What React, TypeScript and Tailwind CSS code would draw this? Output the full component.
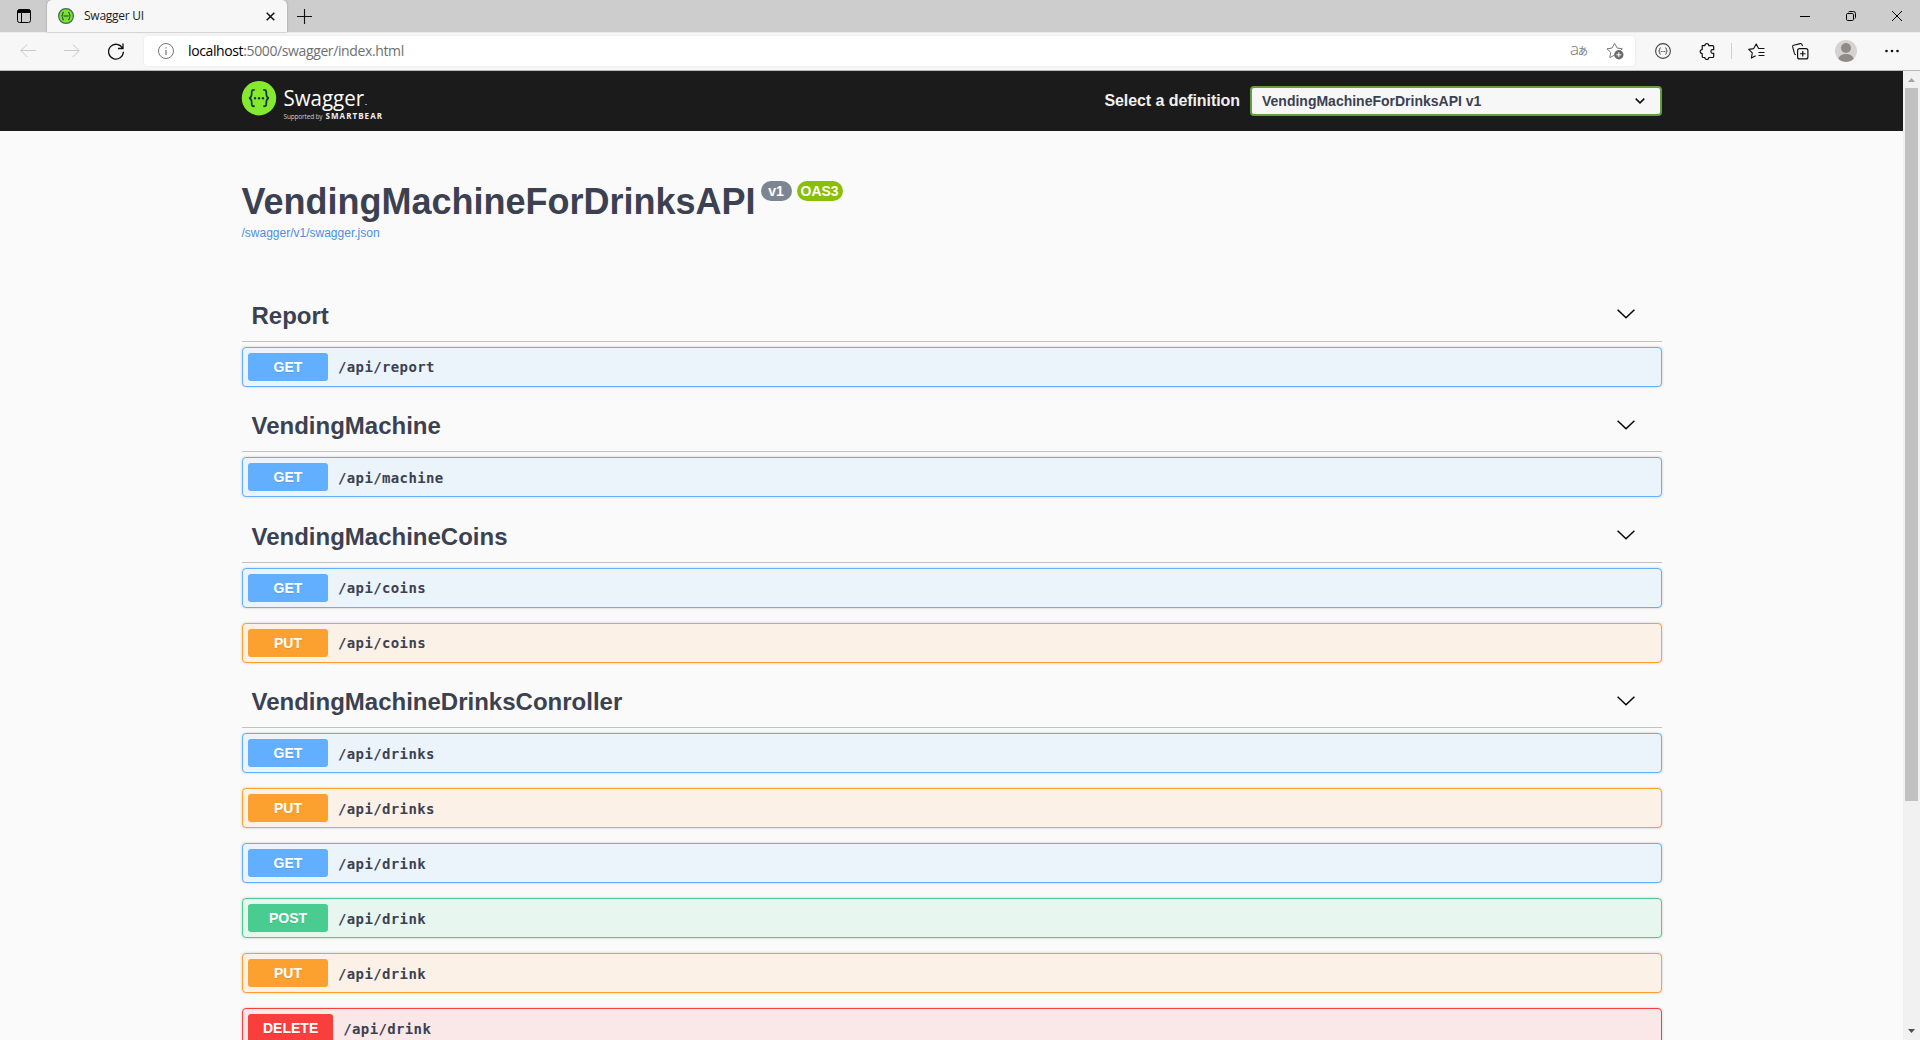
import React from "react";

type Method = "GET" | "PUT" | "POST" | "DELETE";

interface Operation {
  method: Method;
  path: string;
}

interface Section {
  name: string;
  header: string;
  chevron: string;
  pathOffset: string;
  operations: Operation[];
}

const sections: Section[] = [
  {
    name: "Report",
    header: "",
    chevron: "mb-[3px]",
    pathOffset: "pb-px",
    operations: [{ method: "GET", path: "/api/report" }],
  },
  {
    name: "VendingMachine",
    header: "mt-[13px]",
    chevron: "mb-px",
    pathOffset: "pt-px",
    operations: [{ method: "GET", path: "/api/machine" }],
  },
  {
    name: "VendingMachineCoins",
    header: "mt-[14px]",
    chevron: "mb-[3px]",
    pathOffset: "pb-px",
    operations: [
      { method: "GET", path: "/api/coins" },
      { method: "PUT", path: "/api/coins" },
    ],
  },
  {
    name: "VendingMachineDrinksConroller",
    header: "mt-[13px]",
    chevron: "mb-px",
    pathOffset: "pt-px",
    operations: [
      { method: "GET", path: "/api/drinks" },
      { method: "PUT", path: "/api/drinks" },
      { method: "GET", path: "/api/drink" },
      { method: "POST", path: "/api/drink" },
      { method: "PUT", path: "/api/drink" },
      { method: "DELETE", path: "/api/drink" },
    ],
  },
];

const rowColors: Record<Method, string> = {
  GET: "border-[#61affe] bg-[#ebf3fb]",
  PUT: "border-[#fca130] bg-[#fbf1e6]",
  POST: "border-[#49cc90] bg-[#e8f6f0]",
  DELETE: "border-[#f93e3e] bg-[#fae7e7]",
};

const badgeColors: Record<Method, string> = {
  GET: "bg-[#61affe]",
  PUT: "bg-[#fca130]",
  POST: "bg-[#49cc90]",
  DELETE: "bg-[#f93e3e]",
};

function Favicon() {
  return (
    <svg width="16" height="16" viewBox="0 0 16 16" fill="none">
      <circle cx="8" cy="8" r="7.4" fill="#7de02c" stroke="#3f6b55" strokeWidth="1.2" />
      <path
        d="M6 4.2c-1.2 0-1.3.5-1.3 1.4 0 1.2 0 2.1-1.2 2.4 1.2.3 1.2 1.2 1.2 2.4 0 .9.1 1.4 1.3 1.4M10 4.2c1.2 0 1.3.5 1.3 1.4 0 1.2 0 2.1 1.2 2.4-1.2.3-1.2 1.2-1.2 2.4 0 .9-.1 1.4-1.3 1.4"
        stroke="#24513f"
        strokeWidth="1.1"
      />
      <path d="M5.5 8h5" stroke="#24513f" strokeWidth="1.2" />
    </svg>
  );
}

function TabStrip() {
  return (
    <div className="flex h-8 items-stretch bg-[#cdcdcd]">
      <div className="flex w-[47px] items-center pl-[17px]">
        <svg width="14" height="14" viewBox="0 0 14 14" fill="none">
          <rect x=".5" y=".5" width="13" height="13" rx="2" stroke="#000" />
          <path d="M.5 2.5a2 2 0 0 1 2-2h9a2 2 0 0 1 2 2v1.5H.5z" fill="#000" />
          <path d="M4.500 4v9.500" stroke="#000" />
        </svg>
      </div>
      <div className="flex w-[240px] items-center rounded-t-[5px] bg-[#f7f7f7] pl-[11px] shadow-[0_0_2px_rgba(0,0,0,0.35)]">
        <Favicon />
        <span className="ml-[10px] w-[182px] text-[12px] leading-4 tracking-[-0.25px] text-[#1b1b1b]">Swagger UI</span>
        <svg width="9" height="9" viewBox="0 0 9 9">
          <path d="M.7.7l7.600 7.600M8.300.7L.7 8.300" stroke="#111" strokeWidth="1.5" />
        </svg>
      </div>
      <div className="flex flex-1 items-center pl-[10px]">
        <svg width="15" height="15" viewBox="0 0 15 15">
          <path d="M7.500 0v15M0 7.500h15" stroke="#111" strokeWidth="1.1" />
        </svg>
      </div>
      <div className="flex items-center">
        <span className="flex w-[46px] justify-center">
          <svg width="10" height="10" viewBox="0 0 10 10">
            <path d="M0 5.500h10" stroke="#000" />
          </svg>
        </span>
        <span className="flex w-[46px] justify-center">
          <svg width="10" height="10" viewBox="0 0 10 10" fill="none">
            <rect x=".5" y="2.5" width="7" height="7" rx="1.2" stroke="#000" />
            <path d="M2.500 1.300C2.700.8 3 .5 3.600.5H7.500a2 2 0 0 1 2 2v4c0 .6-.3.9-.8 1.100" stroke="#000" />
          </svg>
        </span>
        <span className="flex w-[46px] justify-center">
          <svg width="10" height="10" viewBox="0 0 10 10">
            <path d="M0 0l10 10M10 0L0 10" stroke="#000" />
          </svg>
        </span>
      </div>
    </div>
  );
}

function AddressBar() {
  return (
    <div className="flex h-[39px] items-center border-b border-[#b3bab8] bg-[#f7f7f7] shadow-[inset_0_1px_0_#ececec]">
      <svg className="ml-5" width="16" height="14" viewBox="0 0 16 14" fill="none">
        <path d="M16 6.500H.8M7.300.5L.8 6.500l6.500 6.500" stroke="#c9c9c9" />
      </svg>
      <svg className="ml-7" width="16" height="14" viewBox="0 0 16 14" fill="none">
        <path d="M0 6.500h15.200M8.700.5l6.500 6-6.500 6.500" stroke="#c9c9c9" />
      </svg>
      <svg className="ml-7" width="16" height="17" viewBox="0 0 16 17" fill="none">
        <path d="M14.600 5.300A7.400 7.400 0 1 0 15.400 8.700M15 .5v5h-5" stroke="#111" strokeWidth="1.3" />
      </svg>
      <div className="ml-5 flex h-[30px] w-[1491px] items-center rounded-[4px] bg-white pl-[14px] shadow-[0_0_3px_rgba(0,0,0,0.08)]">
        <svg width="16" height="16" viewBox="0 0 16 16" fill="none">
          <circle cx="8" cy="8" r="7.5" stroke="#767676" />
          <path d="M8 7v5M8 4.200v1.300" stroke="#767676" strokeWidth="1.2" />
        </svg>
        <span className="ml-[14px] flex-1 text-[14px] leading-5 tracking-[-0.38px] text-[#6f6f6f]">
          <span className="text-black">localhost</span>:5000/swagger/index.html
        </span>
        <span className="mr-[17px] flex w-[19px] items-center text-[#767676]">
          <span className="-mt-[5px] text-[17px] font-light leading-4">a</span>
          <span className="-ml-px -mt-px font-['Noto_Sans_CJK_JP',sans-serif] text-[10px] leading-4">あ</span>
        </span>
        <svg className="mr-[11px]" width="18" height="18" viewBox="0 0 18 18" fill="none">
          <path
            d="M14.800 8.300l1.500-1.500-5.100-.7L8.500 1.300 6.200 6l-5.200.8 3.700 3.600-.9 5.200 4.400-2.300"
            stroke="#767676"
            strokeLinejoin="round"
          />
          <circle cx="12.8" cy="12.8" r="4.7" fill="#6b6b6b" />
          <path d="M12.800 10.400v4.800M10.400 12.800h4.800" stroke="#fff" />
        </svg>
      </div>
      <svg className="ml-5" width="16" height="16" viewBox="0 0 16 16" fill="none">
        <circle cx="8" cy="8" r="7.4" stroke="#444" strokeWidth="1.1" />
        <path
          d="M5.700 4.800c-1 0-1 .5-1 1.200 0 1 0 1.700-1.100 2 1.100.3 1.100 1 1.100 2 0 .7 0 1.200 1 1.200M10.300 4.800c1 0 1 .5 1 1.200 0 1 0 1.700 1.100 2-1.100.3-1.100 1-1.100 2 0 .7 0 1.200-1 1.200"
          stroke="#444"
        />
        <path d="M5.800 8.500h1M7.500 8.500h1M9.200 8.500h1" stroke="#444" />
      </svg>
      <svg className="ml-7" width="16" height="17" viewBox="0 0 16 17" fill="none">
        <path
          d="M3.200 2.700h2.600a2 2 0 0 1 4 0h3.900a1 1 0 0 1 1 1v3h-1a1.800 1.800 0 0 0 0 3.600h1v3.200a1 1 0 0 1-1 1H9.800a2 2 0 0 1-4 0H4.200a1 1 0 0 1-1-1v-2.900a2 2 0 0 1 0-4z"
          stroke="#111"
          strokeWidth="1.2"
          strokeLinejoin="round"
        />
      </svg>
      <span className="ml-4 h-4 w-px bg-[#cfcfcf]" />
      <svg className="ml-4" width="17" height="16" viewBox="0 0 17 16" fill="none">
        <path
          d="M10.700 5.700L8.200.9 5.700 5.600.7 6.400l3.600 3.500-.9 5.200 4.300-2.300"
          stroke="#111"
          strokeWidth="1.1"
          strokeLinejoin="round"
        />
        <path d="M10.500 5.500h6M10.500 9.500h6M10.500 12.500h6" stroke="#111" />
      </svg>
      <svg className="ml-[27px]" width="17" height="17" viewBox="0 0 17 17" fill="none">
        <rect x="5.6" y="5.6" width="10.3" height="10.3" rx="2" stroke="#111" strokeWidth="1.2" />
        <path d="M10.750 8v5.500M8 10.750h5.500" stroke="#111" strokeWidth="1.2" />
        <path
          d="M3.900 11.700c-.8-.1-1.300-.6-1.500-1.300L.7 3.900c-.2-.9.2-1.500 1-1.700L8.200.6c.9-.2 1.500.2 1.800 1l.5 1.600"
          stroke="#111"
          strokeWidth="1.1"
        />
      </svg>
      <svg className="ml-[26px]" width="22" height="22" viewBox="0 0 22 22">
        <circle cx="11" cy="11" r="11" fill="#d5d3d1" />
        <circle cx="11" cy="8" r="5" fill="#8f8b88" />
        <path d="M3.400 18.900c.6-3.200 3.700-4.900 7.600-4.900s7 1.700 7.600 4.900A11 11 0 0 1 11 22a11 11 0 0 1-7.600-3.100z" fill="#8f8b88" />
      </svg>
      <svg className="ml-7" width="14" height="4" viewBox="0 0 14 4" fill="#111">
        <circle cx="1.500" cy="2" r="1.3" />
        <circle cx="7" cy="2" r="1.3" />
        <circle cx="12.500" cy="2" r="1.3" />
      </svg>
    </div>
  );
}

function SwaggerLogo() {
  return (
    <svg width="150" height="42" viewBox="0 0 150 42" fill="none">
      <circle cx="18" cy="18.2" r="17.2" fill="#85ea2d" />
      <g stroke="#173647" strokeWidth="1.8">
        <path d="M13.700 10c-2.500-.2-3 .6-3 2.500 0 3 .3 5-2.600 5.600 2.900.6 2.600 2.600 2.600 5.600 0 1.900.5 2.700 3 2.500" />
        <path d="M22.300 10c2.500-.2 3 .6 3 2.500 0 3-.3 5 2.600 5.600-2.900.6-2.600 2.600-2.600 5.600 0 1.900-.5 2.700-3 2.500" />
      </g>
      <g fill="#173647">
        <circle cx="14" cy="18.2" r="1.2" />
        <circle cx="18" cy="18.2" r="1.2" />
        <circle cx="22" cy="18.2" r="1.2" />
      </g>
      <text
        x="42.500"
        y="25.500"
        textLength="80.5"
        lengthAdjust="spacingAndGlyphs"
        fill="#fff"
        className="font-['Open_Sans',sans-serif] text-[22.5px] font-normal"
      >
        Swagger
      </text>
      <path d="M124 24.500h2" stroke="#999" />
      <text x="42.500" y="39" textLength="39" fill="#ccc" className="font-['Open_Sans',sans-serif] text-[6.5px]">
        Supported by
      </text>
      <text x="84.500" y="39" textLength="56.5" fill="#f0f0f0" className="font-['Open_Sans',sans-serif] text-[8px] font-bold">
        SMARTBEAR
      </text>
    </svg>
  );
}

function Topbar() {
  return (
    <header className="flex h-[60px] shrink-0 items-center bg-[#1b1b1b] pl-[241px] pr-[241px]">
      <SwaggerLogo />
      <div className="ml-auto flex items-center">
        <span className="mr-[10px] text-[16px] font-bold leading-5 tracking-[-0.07px] text-[#f0f0f0]">
          Select a definition
        </span>
        <div className="flex h-[30px] w-[412px] items-center justify-between rounded-[4px] border-2 border-[#62a03f] bg-[#f7f7f7] pl-[10px] pr-[15px] text-[14px] font-bold text-[#3b4151]">
          <span>VendingMachineForDrinksAPI v1</span>
          <svg width="10" height="6" viewBox="0 0 10 6" fill="none">
            <path d="M.7.6L5 4.800 9.300.6" stroke="#111" strokeWidth="1.6" />
          </svg>
        </div>
      </div>
    </header>
  );
}

function OperationRow({ method, path, pathOffset }: Operation & { pathOffset: string }) {
  return (
    <div
      className={`mb-[15px] flex h-10 items-center rounded-[4px] border pl-[5px] shadow-[0_0_3px_rgba(0,0,0,0.19)] last:mb-0 ${rowColors[method]}`}
    >
      <span
        className={`flex h-7 min-w-20 items-center justify-center rounded-[3px] px-[15px] text-[14px] font-bold text-white [text-shadow:0_1px_0_rgba(0,0,0,0.1)] ${badgeColors[method]}`}
      >
        {method}
      </span>
      <span
        className={`ml-[10px] font-['DejaVu_Sans_Mono',monospace] text-[14px] font-bold leading-5 tracking-[0.37px] text-[#3b4151] ${pathOffset}`}
      >
        {path}
      </span>
    </div>
  );
}

function TagSection({ section }: { section: Section }) {
  return (
    <section>
      <h3
        className={`mb-[5px] flex h-[52px] items-center justify-between border-b border-[#c1c2c4] pl-[9.5px] pr-[27px] text-[24px] font-bold leading-none text-[#3b4151] ${section.header}`}
      >
        <span>{section.name}</span>
        <svg className={section.chevron} width="18" height="10" viewBox="0 0 18 10" fill="none">
          <path d="M.6.8L9 8.800 17.400.8" stroke="#000" strokeWidth="1.5" />
        </svg>
      </h3>
      {section.operations.map((op) => (
        <OperationRow key={op.method + op.path} pathOffset={section.pathOffset} {...op} />
      ))}
    </section>
  );
}

function Scrollbar() {
  return (
    <div className="flex w-[17px] shrink-0 flex-col items-center bg-[#f1f1f1]">
      <svg className="h-[17px] w-[17px] shrink-0" viewBox="0 0 17 17">
        <path d="M5 11l3.500-4 3.500 4z" fill="#a3a3a3" />
      </svg>
      <div className="h-[713px] w-[13px] bg-[#c1c1c1]" />
      <svg className="mt-auto h-[17px] w-[17px] shrink-0" viewBox="0 0 17 17">
        <path d="M5 6h7l-3.500 4z" fill="#505050" />
      </svg>
    </div>
  );
}

export default function App() {
  return (
    <div className="flex h-[1040px] w-[1920px] flex-col overflow-hidden bg-[#fafafa] font-['Liberation_Sans',Arial,sans-serif]">
      <div className="shrink-0 font-['Open_Sans','Noto_Sans',sans-serif]">
        <TabStrip />
        <AddressBar />
      </div>
      <div className="flex min-h-0 flex-1">
        <div className="flex min-w-0 flex-1 flex-col overflow-hidden">
          <Topbar />
          <main className="ml-[242px] w-[1420px] shrink-0 pt-[49px]">
            <div className="-ml-[0.5px] flex h-[42px] items-start">
              <h2 className="pt-[2px] text-[36px] font-bold leading-[40px] text-[#3b4151]">VendingMachineForDrinksAPI</h2>
              <span className="ml-[5px] mt-px flex h-5 w-[31px] items-center justify-center rounded-full bg-[#7d8492] text-[14px] font-bold text-white">
                v1
              </span>
              <span className="ml-[5px] mt-px flex h-5 w-[46px] items-center justify-center rounded-full bg-[#89bf04] text-[14px] font-bold text-white">
                OAS3
              </span>
            </div>
            <a className="-ml-[0.5px] mt-[3px] block h-[65px] text-[12px] leading-4 text-[#4990e2]">/swagger/v1/swagger.json</a>
            {sections.map((s) => (
              <TagSection key={s.name} section={s} />
            ))}
          </main>
        </div>
        <Scrollbar />
      </div>
    </div>
  );
}
